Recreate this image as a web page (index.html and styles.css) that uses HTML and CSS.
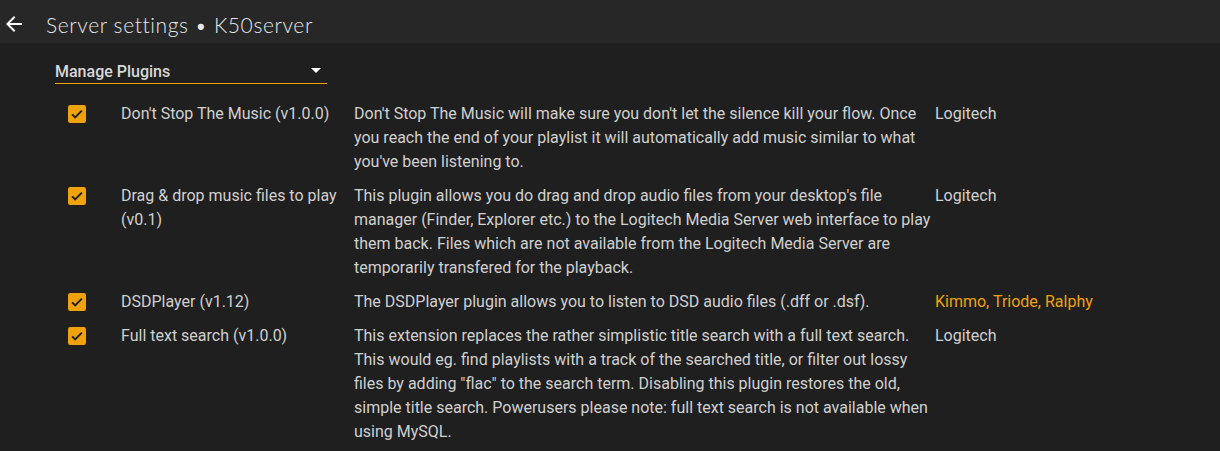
FILE: index.html
```html
<!DOCTYPE html>
<html>
<head>
<meta charset="utf-8">
<link rel="stylesheet" href="styles.css">
</head>
<body>
<header class="toolbar">
  <svg class="back" width="24" height="24" viewBox="0 0 24 24"><path d="M20 11H7.83l5.59-5.59L12 4l-8 8 8 8 1.41-1.41L7.83 13H20v-2z" fill="#fff"/></svg>
  <div class="title">Server settings • K50server</div>
</header>
<main class="content">
  <div class="select">
    <span class="select-text">Manage Plugins</span>
    <span class="caret"></span>
  </div>
  <div class="plugins">
    <div class="row">
      <div class="cb"><svg viewBox="0 0 24 24" width="18" height="18"><rect x="0" y="0" width="24" height="24" rx="3" fill="#f0a20a"/><path d="M5.5 12.5l4 4 9-9" stroke="#1f1f1f" stroke-width="2.6" fill="none"/></svg></div>
      <div class="name">Don't Stop The Music (v1.0.0)</div>
      <div class="desc">Don't Stop The Music will make sure you don't let the silence kill your flow. Once you reach the end of your playlist it will automatically add music similar to what you've been listening to.</div>
      <div class="author">Logitech</div>
    </div>
    <div class="row">
      <div class="cb"><svg viewBox="0 0 24 24" width="18" height="18"><rect x="0" y="0" width="24" height="24" rx="3" fill="#f0a20a"/><path d="M5.5 12.5l4 4 9-9" stroke="#1f1f1f" stroke-width="2.6" fill="none"/></svg></div>
      <div class="name">Drag &amp; drop music files to play (v0.1)</div>
      <div class="desc">This plugin allows you do drag and drop audio files from your desktop's file manager (Finder, Explorer etc.) to the Logitech Media Server web interface to play them back. Files which are not available from the Logitech Media Server are temporarily transfered for the playback.</div>
      <div class="author">Logitech</div>
    </div>
    <div class="row">
      <div class="cb"><svg viewBox="0 0 24 24" width="18" height="18"><rect x="0" y="0" width="24" height="24" rx="3" fill="#f0a20a"/><path d="M5.5 12.5l4 4 9-9" stroke="#1f1f1f" stroke-width="2.6" fill="none"/></svg></div>
      <div class="name">DSDPlayer (v1.12)</div>
      <div class="desc">The DSDPlayer plugin allows you to listen to DSD audio files (.dff or .dsf).</div>
      <div class="author link">Kimmo, Triode, Ralphy</div>
    </div>
    <div class="row">
      <div class="cb"><svg viewBox="0 0 24 24" width="18" height="18"><rect x="0" y="0" width="24" height="24" rx="3" fill="#f0a20a"/><path d="M5.5 12.5l4 4 9-9" stroke="#1f1f1f" stroke-width="2.6" fill="none"/></svg></div>
      <div class="name">Full text search (v1.0.0)</div>
      <div class="desc">This extension replaces the rather simplistic title search with a full text search. This would eg. find playlists with a track of the searched title, or filter out lossy files by adding "flac" to the search term. Disabling this plugin restores the old, simple title search. Powerusers please note: full text search is not available when using MySQL.</div>
      <div class="author">Logitech</div>
    </div>
  </div>
</main>
</body>
</html>
```

FILE: styles.css
```css
html, body {
  margin: 0;
  padding: 0;
  background: #1f1f1f;
  height: 100%;
  overflow: hidden;
}
body {
  font-family: Roboto, "Liberation Sans", sans-serif;
  color: #d0d0d0;
}
.toolbar {
  height: 43px;
  background: #272727;
  display: flex;
  align-items: center;
}
.back {
  margin-left: 2px;
  margin-right: 20px;
  margin-top: 4px;
}
.title {
  font-family: Lato, sans-serif;
  font-weight: 300;
  font-size: 21px;
  color: #e6e6e6;
  letter-spacing: 0.6px;
  margin-top: 6px;
}
.content {
  padding: 16px 0 0 55px;
}
.select {
  width: 272px;
  height: 25px;
  border-bottom: 1px solid #f0a20a;
  display: flex;
  align-items: center;
  justify-content: space-between;
  box-sizing: border-box;
}
.select-text {
  font-size: 16px;
  font-weight: 500;
  color: #d8d8d8;
}
.caret {
  width: 0;
  height: 0;
  border-left: 5px solid transparent;
  border-right: 5px solid transparent;
  border-top: 5px solid #fff;
  margin-right: 6px;
  margin-top: -1px;
}
.plugins {
  margin-top: 13px;
  margin-left: 13px;
}
.row {
  display: grid;
  grid-template-columns: 53px 233px 581px auto;
  padding: 5px 0;
  font-size: 16px;
  line-height: 24px;
}
.cb {
  padding-top: 3px;
  height: 18px;
}
.cb svg {
  display: block;
}
.desc {
  padding-right: 4px;
}
.author.link {
  color: #f0a20a;
}
```
